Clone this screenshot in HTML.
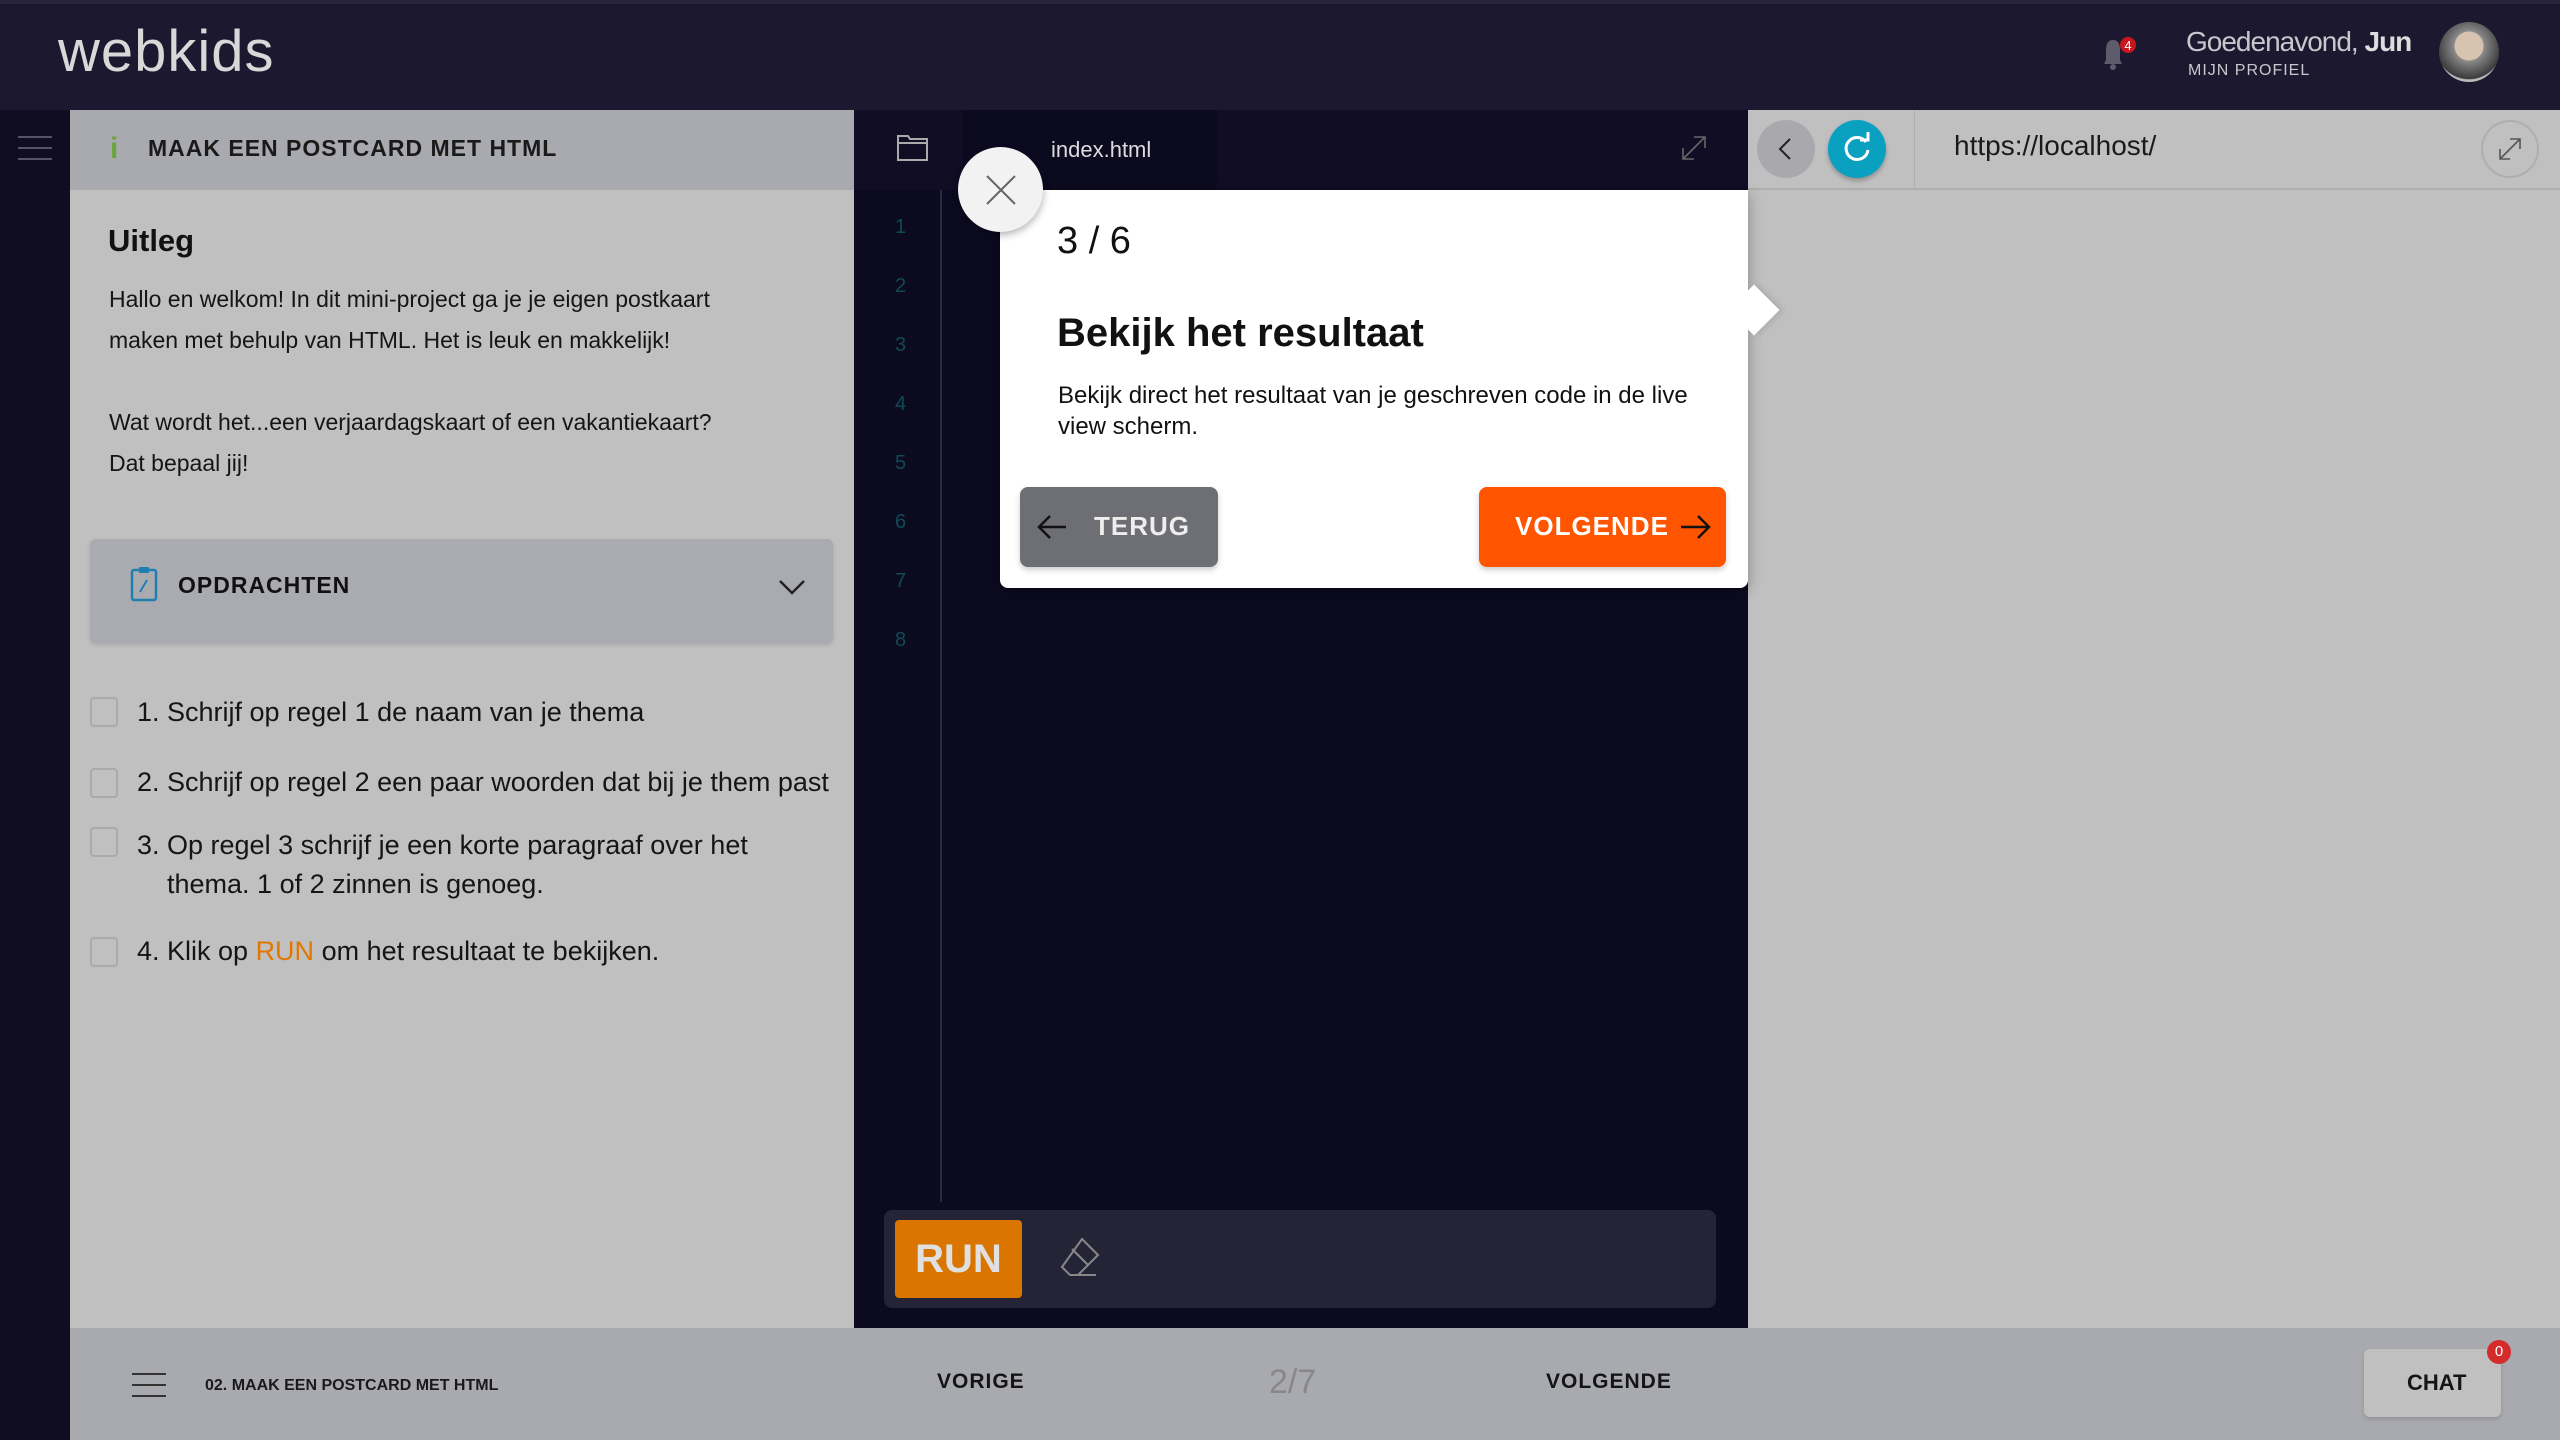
<!DOCTYPE html>
<html><head><meta charset="utf-8"><style>
*{margin:0;padding:0;box-sizing:border-box}
body{width:2560px;height:1440px;overflow:hidden;background:#0c0a1f;font-family:"Liberation Sans",sans-serif;position:relative}
.a{position:absolute}
.hdr{left:0;top:0;width:2560px;height:110px;background:#1b1830;border-top:4px solid #27243d}
.rail{left:0;top:110px;width:70px;height:1330px;background:#100d22}
.lp{left:70px;top:110px;width:784px;height:1218px;background:#c0c0c0}
.lph{left:70px;top:110px;width:784px;height:80px;background:#a9aab0}
.ed{left:854px;top:110px;width:894px;height:1218px;background:#0c0a1f}
.tabbar{left:854px;top:110px;width:894px;height:80px;background:#100d24}
.pv{left:1748px;top:110px;width:812px;height:1218px;background:#c0c0c0}
.bb{left:70px;top:1328px;width:2490px;height:112px;background:#a9aab0}
.t{color:#111;white-space:nowrap}
.ln{color:#0f4b57;font-size:20px;left:895px}
.cb{left:90px;width:28px;height:30px;border:2px solid #aaa;border-radius:4px}
.ci{font-size:27px;color:#151515;left:137px}
</style></head><body>
<div class="a hdr"></div>
<div class="a t" style="left:58px;top:18px;font-size:58px;color:#d8d8d8;letter-spacing:1px">webkids</div>
<svg class="a" style="left:2096px;top:34px" width="40" height="40" viewBox="0 0 40 40"><path d="M8 30 L10 26 L10 16 Q10 6 17 6 Q24 6 24 16 L24 26 L26 30 Z" fill="#5d5b6c"/><circle cx="17" cy="33" r="3" fill="#5d5b6c"/><circle cx="32" cy="11" r="8" fill="#c8161d"/><text x="32" y="16" font-size="13" fill="#fff" text-anchor="middle" font-family="Liberation Sans">4</text></svg>
<div class="a t" style="left:2186px;top:26px;font-size:28px;letter-spacing:-1px;color:#c8c8cc">Goedenavond, <b style="color:#ddd">Jun</b></div>
<div class="a t" style="left:2188px;top:62px;font-size:16px;color:#c8c8cc;letter-spacing:1px">MIJN PROFIEL</div>
<div class="a" style="left:2439px;top:22px;width:60px;height:60px;border-radius:50%;background:radial-gradient(circle at 50% 40%,#d8c2b0 0 30%,#8a8a8a 32%,#3a3a3a 70%,#bbb 72%)"></div>

<div class="a rail"></div>
<div class="a" style="left:18px;top:136px;width:34px;height:2px;background:#55536a;box-shadow:0 11px 0 #55536a,0 22px 0 #55536a"></div>

<div class="a lp"></div>
<div class="a lph"></div>
<div class="a t" style="left:110px;top:132px;font-size:30px;color:#6aa63a;font-weight:bold">i</div>
<div class="a t" style="left:148px;top:135px;font-size:23px;font-weight:bold;letter-spacing:1px;color:#1a1a1a">MAAK EEN POSTCARD MET HTML</div>
<div class="a t" style="left:108px;top:223px;font-size:31px;font-weight:bold">Uitleg</div>
<div class="a t" style="left:109px;top:279px;font-size:23px;line-height:41px;color:#151515">Hallo en welkom! In dit mini-project ga je je eigen postkaart<br>maken met behulp van HTML. Het is leuk en makkelijk!<br><br>Wat wordt het...een verjaardagskaart of een vakantiekaart?<br>Dat bepaal jij!</div>
<div class="a" style="left:90px;top:539px;width:743px;height:104px;background:#aaabb0;border-radius:6px;box-shadow:0 2px 4px rgba(0,0,0,.12)"></div>
<svg class="a" style="left:130px;top:566px" width="30" height="36" viewBox="0 0 30 36"><rect x="2" y="4" width="24" height="30" rx="2" fill="none" stroke="#1f7fb0" stroke-width="2.5"/><rect x="9" y="1" width="10" height="6" rx="1" fill="#1f7fb0"/><path d="M10 26 L17 14" stroke="#1f7fb0" stroke-width="2"/></svg>
<div class="a t" style="left:178px;top:572px;font-size:23px;font-weight:bold;letter-spacing:1px">OPDRACHTEN</div>
<svg class="a" style="left:778px;top:578px" width="28" height="18"><path d="M2 3 L14 15 L26 3" fill="none" stroke="#222" stroke-width="2.5"/></svg>
<div class="a cb" style="top:697px"></div><div class="a t ci" style="top:697px">1. Schrijf op regel 1 de naam van je thema</div>
<div class="a cb" style="top:768px"></div><div class="a t ci" style="top:767px">2. Schrijf op regel 2 een paar woorden dat bij je them past</div>
<div class="a cb" style="top:827px"></div><div class="a t ci" style="top:826px;line-height:39px">3. Op regel 3 schrijf je een korte paragraaf over het<br>&nbsp;&nbsp;&nbsp;&nbsp;thema. 1 of 2 zinnen is genoeg.</div>
<div class="a cb" style="top:937px"></div><div class="a t ci" style="top:936px">4. Klik op <b style="color:#e07800;font-weight:normal">RUN</b> om het resultaat te bekijken.</div>

<div class="a ed"></div>
<div class="a tabbar"></div>
<div class="a" style="left:963px;top:110px;width:254px;height:80px;background:#0c0a1f"></div>
<svg class="a" style="left:896px;top:132px" width="34" height="30"><path d="M2 4 L12 4 L14 7 L31 7 L31 28 L2 28 Z M2 11 L31 11" fill="none" stroke="#aaa" stroke-width="2"/></svg>
<div class="a t" style="left:1051px;top:137px;font-size:22px;color:#dcdcdc">index.html</div>
<svg class="a" style="left:1680px;top:134px" width="28" height="28"><path d="M3 25 L25 3 M14 3 L25 3 L25 14 M3 14 L3 25 L14 25" fill="none" stroke="#666" stroke-width="1.6"/></svg>
<div class="a" style="left:940px;top:190px;width:2px;height:1012px;background:#2b2a3c"></div>
<div class="a t ln" style="top:216px">1</div><div class="a t ln" style="top:275px">2</div><div class="a t ln" style="top:334px">3</div><div class="a t ln" style="top:393px">4</div><div class="a t ln" style="top:452px">5</div><div class="a t ln" style="top:511px">6</div><div class="a t ln" style="top:570px">7</div><div class="a t ln" style="top:629px">8</div>
<div class="a" style="left:884px;top:1210px;width:832px;height:98px;background:#252437;border-radius:8px"></div>
<div class="a t" style="left:895px;top:1220px;width:127px;height:78px;background:#d97500;border-radius:4px;color:#e0e0e0;font-size:40px;font-weight:bold;text-align:center;line-height:78px">RUN</div>
<svg class="a" style="left:1056px;top:1235px" width="50" height="50"><path d="M26 4 L42 20 L22 40 L14 40 L6 32 Z M14 40 L40 40 M16 14 L32 30" fill="none" stroke="#888" stroke-width="2"/></svg>

<div class="a pv"></div>
<div class="a" style="left:1748px;top:188px;width:812px;height:2px;background:#aeaeae"></div>
<div class="a" style="left:1914px;top:110px;width:1px;height:80px;background:#b0b0b0"></div>
<div class="a" style="left:1757px;top:120px;width:58px;height:58px;border-radius:50%;background:#a8a8ad"></div>
<svg class="a" style="left:1776px;top:137px" width="20" height="24"><path d="M14 2 L4 12 L14 22" fill="none" stroke="#222" stroke-width="2"/></svg>
<div class="a" style="left:1828px;top:120px;width:58px;height:58px;border-radius:50%;background:#0aa0bf;box-shadow:0 3px 5px rgba(0,0,0,.25)"></div>
<svg class="a" style="left:1840px;top:132px" width="34" height="34"><path d="M26 10 A11 11 0 1 0 28 18" fill="none" stroke="#fff" stroke-width="3"/><path d="M20 8 L28 8 L28 0" fill="none" stroke="#fff" stroke-width="3"/></svg>
<div class="a t" style="left:1954px;top:130px;font-size:28px;color:#1a1a1a">https://localhost/</div>
<div class="a" style="left:2481px;top:120px;width:58px;height:58px;border-radius:50%;border:2px solid #aeaeae"></div>
<svg class="a" style="left:2497px;top:136px" width="26" height="26"><path d="M3 23 L23 3 M13 3 L23 3 L23 13 M3 13 L3 23 L13 23" fill="none" stroke="#555" stroke-width="1.6"/></svg>

<div class="a" style="left:1000px;top:190px;width:748px;height:398px;background:#fff;border-radius:0 0 8px 8px;box-shadow:0 4px 14px rgba(0,0,0,.3)"></div>
<div class="a" style="left:1736px;top:292px;width:36px;height:36px;background:#fff;transform:rotate(45deg);box-shadow:3px -3px 6px rgba(0,0,0,.1)"></div>
<div class="a" style="left:1000px;top:280px;width:748px;height:60px;background:#fff"></div>
<div class="a" style="left:958px;top:147px;width:85px;height:85px;border-radius:50%;background:#f2f2f2;box-shadow:0 3px 8px rgba(0,0,0,.3)"></div>
<svg class="a" style="left:983px;top:172px" width="36" height="36"><path d="M4 4 L32 32 M32 4 L4 32" stroke="#666" stroke-width="2"/></svg>
<div class="a t" style="left:1057px;top:220px;font-size:38px;color:#111">3 / 6</div>
<div class="a t" style="left:1057px;top:311px;font-size:40px;font-weight:bold;color:#111">Bekijk het resultaat</div>
<div class="a t" style="left:1058px;top:380px;font-size:24px;line-height:31px;color:#111">Bekijk direct het resultaat van je geschreven code in de live<br>view scherm.</div>
<div class="a" style="left:1020px;top:487px;width:198px;height:80px;background:#6e6e75;border-radius:8px;box-shadow:0 3px 6px rgba(0,0,0,.2)"></div>
<svg class="a" style="left:1036px;top:510px" width="34" height="34"><path d="M30 17 L4 17 M14 6 L3 17 L14 28" fill="none" stroke="#111" stroke-width="2.5"/></svg>
<div class="a t" style="left:1094px;top:511px;font-size:26px;font-weight:bold;color:#eee;letter-spacing:1px">TERUG</div>
<div class="a" style="left:1479px;top:487px;width:247px;height:80px;background:#ff5500;border-radius:8px;box-shadow:0 3px 6px rgba(0,0,0,.2)"></div>
<div class="a t" style="left:1515px;top:511px;font-size:26px;font-weight:bold;color:#fff;letter-spacing:1px">VOLGENDE</div>
<svg class="a" style="left:1678px;top:510px" width="34" height="34"><path d="M3 17 L30 17 M20 6 L31 17 L20 28" fill="none" stroke="#111" stroke-width="2.5"/></svg>

<div class="a bb"></div>
<div class="a" style="left:132px;top:1373px;width:34px;height:2px;background:#333;box-shadow:0 11px 0 #333,0 22px 0 #333"></div>
<div class="a t" style="left:205px;top:1377px;font-size:16px;font-weight:bold;color:#1a1a1a">02. MAAK EEN POSTCARD MET HTML</div>
<div class="a t" style="left:937px;top:1370px;font-size:21px;font-weight:bold;letter-spacing:1px;color:#151515">VORIGE</div>
<div class="a t" style="left:1269px;top:1363px;font-size:34px;color:#888">2/7</div>
<div class="a t" style="left:1546px;top:1370px;font-size:21px;font-weight:bold;letter-spacing:1px;color:#151515">VOLGENDE</div>
<div class="a" style="left:2364px;top:1349px;width:137px;height:68px;background:#c0c0c0;border-radius:6px;box-shadow:0 2px 4px rgba(0,0,0,.15)"></div>
<div class="a t" style="left:2407px;top:1370px;font-size:22px;font-weight:bold;color:#151515">CHAT</div>
<div class="a t" style="left:2487px;top:1340px;width:24px;height:24px;border-radius:50%;background:#d42b2b;color:#fff;font-size:15px;text-align:center;line-height:24px">0</div>
</body></html>
